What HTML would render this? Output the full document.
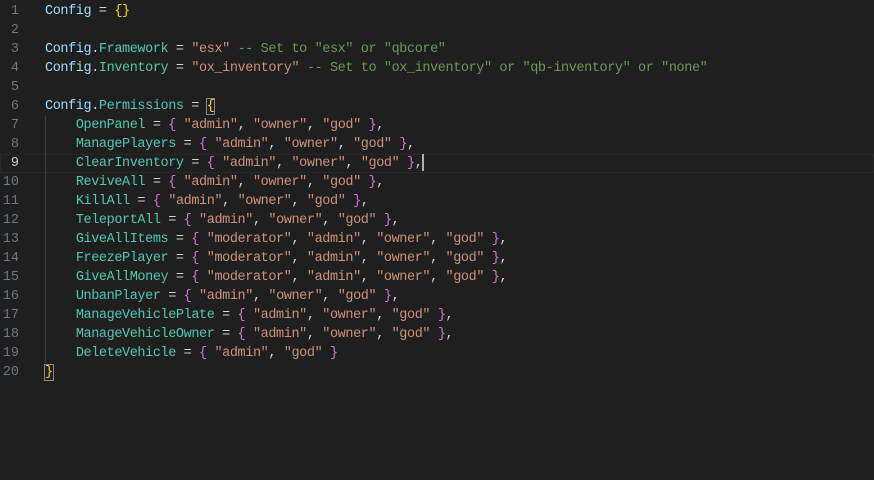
<!DOCTYPE html>
<html><head><style>
html,body{margin:0;padding:0;background:#1f1f1f;width:874px;height:480px;overflow:hidden}
.ed{position:absolute;left:0;top:2px;width:874px;font-family:"Liberation Mono",monospace;font-size:13.5px;letter-spacing:-0.4px;}
.l{position:relative;height:19px;line-height:19px;white-space:pre}
.n{position:absolute;left:0;width:19px;text-align:right;color:#6e7681;letter-spacing:0}
.c{position:absolute;left:45px;color:#d4d4d4}
.cur{outline:1px solid #282828;outline-offset:-1px}
.cur .n{color:#cccccc}
.g{position:absolute;left:45px;top:0;width:1px;height:19px;background:#404040}
.v{color:#9cdcfe}.f{color:#4ec9b0}.s{color:#ce9178}.m{color:#6a9955}.y{color:#ffd700}.p{color:#da70d6}.k{color:#4ec9b0}
.box{outline:1px solid #888;}
.caret{display:inline-block;width:2px;height:17px;background:#aeafad;vertical-align:middle}
</style></head><body><div class="ed">
<div class="l"><span class="n">1</span><span class="c"><span class="v">Config</span> = <span class="y">{}</span></span></div>
<div class="l"><span class="n">2</span></div>
<div class="l"><span class="n">3</span><span class="c"><span class="v">Config</span>.<span class="f">Framework</span> = <span class="s">"esx"</span> <span class="m">-- Set to "esx" or "qbcore"</span></span></div>
<div class="l"><span class="n">4</span><span class="c"><span class="v">Config</span>.<span class="f">Inventory</span> = <span class="s">"ox_inventory"</span> <span class="m">-- Set to "ox_inventory" or "qb-inventory" or "none"</span></span></div>
<div class="l"><span class="n">5</span></div>
<div class="l"><span class="n">6</span><span class="c"><span class="v">Config</span>.<span class="f">Permissions</span> = <span class="y box">{</span></span></div>
<div class="l"><span class="n">7</span><span class="g"></span><span class="c">    <span class="k">OpenPanel</span> = <span class="p">{</span> <span class="s">"admin"</span>, <span class="s">"owner"</span>, <span class="s">"god"</span> <span class="p">}</span>,</span></div>
<div class="l"><span class="n">8</span><span class="g"></span><span class="c">    <span class="k">ManagePlayers</span> = <span class="p">{</span> <span class="s">"admin"</span>, <span class="s">"owner"</span>, <span class="s">"god"</span> <span class="p">}</span>,</span></div>
<div class="l cur"><span class="n">9</span><span class="g"></span><span class="c">    <span class="k">ClearInventory</span> = <span class="p">{</span> <span class="s">"admin"</span>, <span class="s">"owner"</span>, <span class="s">"god"</span> <span class="p">}</span>,<span class="caret"></span></span></div>
<div class="l"><span class="n">10</span><span class="g"></span><span class="c">    <span class="k">ReviveAll</span> = <span class="p">{</span> <span class="s">"admin"</span>, <span class="s">"owner"</span>, <span class="s">"god"</span> <span class="p">}</span>,</span></div>
<div class="l"><span class="n">11</span><span class="g"></span><span class="c">    <span class="k">KillAll</span> = <span class="p">{</span> <span class="s">"admin"</span>, <span class="s">"owner"</span>, <span class="s">"god"</span> <span class="p">}</span>,</span></div>
<div class="l"><span class="n">12</span><span class="g"></span><span class="c">    <span class="k">TeleportAll</span> = <span class="p">{</span> <span class="s">"admin"</span>, <span class="s">"owner"</span>, <span class="s">"god"</span> <span class="p">}</span>,</span></div>
<div class="l"><span class="n">13</span><span class="g"></span><span class="c">    <span class="k">GiveAllItems</span> = <span class="p">{</span> <span class="s">"moderator"</span>, <span class="s">"admin"</span>, <span class="s">"owner"</span>, <span class="s">"god"</span> <span class="p">}</span>,</span></div>
<div class="l"><span class="n">14</span><span class="g"></span><span class="c">    <span class="k">FreezePlayer</span> = <span class="p">{</span> <span class="s">"moderator"</span>, <span class="s">"admin"</span>, <span class="s">"owner"</span>, <span class="s">"god"</span> <span class="p">}</span>,</span></div>
<div class="l"><span class="n">15</span><span class="g"></span><span class="c">    <span class="k">GiveAllMoney</span> = <span class="p">{</span> <span class="s">"moderator"</span>, <span class="s">"admin"</span>, <span class="s">"owner"</span>, <span class="s">"god"</span> <span class="p">}</span>,</span></div>
<div class="l"><span class="n">16</span><span class="g"></span><span class="c">    <span class="k">UnbanPlayer</span> = <span class="p">{</span> <span class="s">"admin"</span>, <span class="s">"owner"</span>, <span class="s">"god"</span> <span class="p">}</span>,</span></div>
<div class="l"><span class="n">17</span><span class="g"></span><span class="c">    <span class="k">ManageVehiclePlate</span> = <span class="p">{</span> <span class="s">"admin"</span>, <span class="s">"owner"</span>, <span class="s">"god"</span> <span class="p">}</span>,</span></div>
<div class="l"><span class="n">18</span><span class="g"></span><span class="c">    <span class="k">ManageVehicleOwner</span> = <span class="p">{</span> <span class="s">"admin"</span>, <span class="s">"owner"</span>, <span class="s">"god"</span> <span class="p">}</span>,</span></div>
<div class="l"><span class="n">19</span><span class="g"></span><span class="c">    <span class="k">DeleteVehicle</span> = <span class="p">{</span> <span class="s">"admin"</span>, <span class="s">"god"</span> <span class="p">}</span></span></div>
<div class="l"><span class="n">20</span><span class="c"><span class="y box">}</span></span></div>
</div></body></html>
